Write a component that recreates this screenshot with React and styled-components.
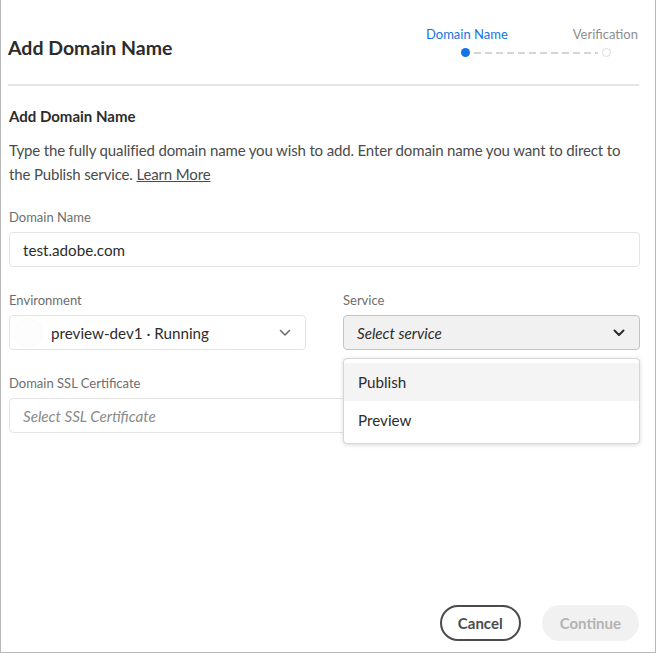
import React from 'react';
import styled, { createGlobalStyle } from 'styled-components';

const GlobalStyle = createGlobalStyle`
	html, body {
		margin: 0;
		padding: 0;
		background: #ffffff;
	}
	body {
		font-family: Lato, 'Open Sans', sans-serif;
		color: #2c2c2c;
	}
`;

const Dialog = styled.div`
	box-sizing: border-box;
	width: 656px;
	height: 653px;
	border: 1px solid #b9b9b9;
	border-top: none;
	display: flex;
	flex-direction: column;
	padding: 0 16px 0 7px;
`;

const Header = styled.div`
	display: flex;
	justify-content: space-between;
	align-items: flex-start;
	height: 84px;
	border-bottom: 2px solid #e6e6e6;
`;

const Title = styled.h1`
	margin: 35px 0 0 0;
	font-size: 19.5px;
	font-weight: 700;
	line-height: 26px;
	color: #2c2c2c;
`;

const Stepper = styled.div`
	margin-top: 26px;
	margin-right: 1px;
	display: flex;
	flex-direction: column;
`;

const StepLabels = styled.div`
	display: flex;
	gap: 65px;
`;

const Step = styled.span`
	font-size: 13px;
	line-height: 16px;
	color: ${props => (props.active ? '#1473e6' : '#8e8e8e')};
`;

const StepTrack = styled.div`
	margin: 6px 27px 0 35px;
	display: flex;
	align-items: center;
	gap: 4px;
`;

const Dot = styled.span`
	box-sizing: border-box;
	width: 9px;
	height: 9px;
	border-radius: 50%;
	flex: none;
	background: ${props => (props.active ? '#1473e6' : '#ffffff')};
	border: ${props => (props.active ? 'none' : '1.5px solid #dcdcdc')};
`;

const Dashes = styled.span`
	flex: 1;
	height: 2px;
	background-image: linear-gradient(to right, #d5d5d5 60%, transparent 60%);
	background-size: 11px 2px;
`;

const Body = styled.div`
	padding: 19px 0 0 1px;
	flex: 1;
`;

const SectionTitle = styled.h2`
	margin: 0;
	font-size: 15px;
	font-weight: 700;
	line-height: 22px;
	color: #2c2c2c;
`;

const Description = styled.p`
	margin: 11px 0 0 0;
	font-size: 15px;
	letter-spacing: -0.15px;
	line-height: 24px;
	color: #4b4b4b;
`;

const LearnMore = styled.span`
	text-decoration: underline;
	cursor: pointer;
`;

const Grid = styled.div`
	display: grid;
	grid-template-columns: 297px 297px;
	column-gap: 37px;
	row-gap: 25px;
	margin-top: 23px;
`;

const Field = styled.div`
	grid-column: ${props => (props.full ? '1 / -1' : 'auto')};
	position: relative;
`;

const Label = styled.div`
	font-size: 13px;
	line-height: 16px;
	color: #6e6e6e;
	margin-bottom: 7px;
`;

const Box = styled.div`
	box-sizing: border-box;
	height: 35px;
	border: 1px solid ${props => (props.pressed ? '#c4c4c4' : '#e4e4e4')};
	border-radius: 4px;
	background: ${props => (props.pressed ? '#f1f1f1' : '#ffffff')};
	display: flex;
	align-items: center;
	padding: 0 14px 0 ${props => props.indent || 13}px;
	font-size: 15.2px;
	color: #2c2c2c;
	position: relative;
`;

const Value = styled.span`
	flex: 1;
	font-style: ${props => (props.placeholder ? 'italic' : 'normal')};
	color: ${props => (props.placeholder ? '#8a8a8a' : '#2c2c2c')};
`;

const Pending = styled.span`
	flex: 1;
	font-style: italic;
	color: #2c2c2c;
`;

const StatusBlur = styled.span`
	position: absolute;
	left: 3px;
	top: 2px;
	width: 30px;
	height: 30px;
	border-radius: 50%;
	background: radial-gradient(circle, #fdfdfd 60%, #f6f6f6 100%);
`;

const Menu = styled.div`
	position: absolute;
	left: 0;
	right: 0;
	top: 66px;
	z-index: 2;
	box-sizing: border-box;
	background: #ffffff;
	border: 1px solid #d6d6d6;
	border-radius: 4px;
	padding: 4px 0;
	box-shadow: 0 1px 4px rgba(0, 0, 0, 0.15);
`;

const MenuItem = styled.div`
	height: 38px;
	display: flex;
	align-items: center;
	padding-left: 14px;
	font-size: 15.2px;
	color: #2c2c2c;
	background: ${props => (props.hover ? '#f4f4f4' : '#ffffff')};
`;

const Footer = styled.div`
	display: flex;
	justify-content: flex-end;
	gap: 21px;
	padding-bottom: 11px;
`;

const Button = styled.button`
	box-sizing: border-box;
	height: 36px;
	border-radius: 18px;
	padding: 0 ${props => props.pad}px;
	font-family: Lato, 'Open Sans', sans-serif;
	font-size: 15px;
	font-weight: 700;
	border: ${props => (props.quiet ? '2px solid #4b4b4b' : '2px solid #f1f1f1')};
	background: ${props => (props.quiet ? '#ffffff' : '#f1f1f1')};
	color: ${props => (props.quiet ? '#4b4b4b' : '#b3b3b3')};
`;

function Chevron({ bold }) {
	return (
		<svg width="12" height="8" viewBox="0 0 12 8">
			<path
				d="M1.5 1.5 L6 6 L10.5 1.5"
				fill="none"
				stroke={bold ? '#2c2c2c' : '#6e6e6e'}
				strokeWidth={bold ? 2 : 1.6}
				strokeLinecap="round"
				strokeLinejoin="round"
			/>
		</svg>
	);
}

export default function App() {
	return (
		<>
			<GlobalStyle />
			<Dialog>
				<Header>
					<Title>Add Domain Name</Title>
					<Stepper>
						<StepLabels>
							<Step active>Domain Name</Step>
							<Step>Verification</Step>
						</StepLabels>
						<StepTrack>
							<Dot active />
							<Dashes />
							<Dot />
						</StepTrack>
					</Stepper>
				</Header>
				<Body>
					<SectionTitle>Add Domain Name</SectionTitle>
					<Description>
						Type the fully qualified domain name you wish to add. Enter domain name you want to direct to
						the Publish service. <LearnMore>Learn More</LearnMore>
					</Description>
					<Grid>
						<Field full>
							<Label>Domain Name</Label>
							<Box>
								<Value>test.adobe.com</Value>
							</Box>
						</Field>
						<Field>
							<Label>Environment</Label>
							<Box indent={41}>
								<StatusBlur />
								<Value>preview-dev1 · Running</Value>
								<Chevron />
							</Box>
						</Field>
						<Field>
							<Label>Service</Label>
							<Box pressed>
								<Pending>Select service</Pending>
								<Chevron bold />
							</Box>
							<Menu>
								<MenuItem hover>Publish</MenuItem>
								<MenuItem>Preview</MenuItem>
							</Menu>
						</Field>
						<Field full>
							<Label>Domain SSL Certificate</Label>
							<Box>
								<Value placeholder="true">Select SSL Certificate</Value>
							</Box>
						</Field>
					</Grid>
				</Body>
				<Footer>
					<Button quiet pad={16}>Cancel</Button>
					<Button pad={16}>Continue</Button>
				</Footer>
			</Dialog>
		</>
	);
}
